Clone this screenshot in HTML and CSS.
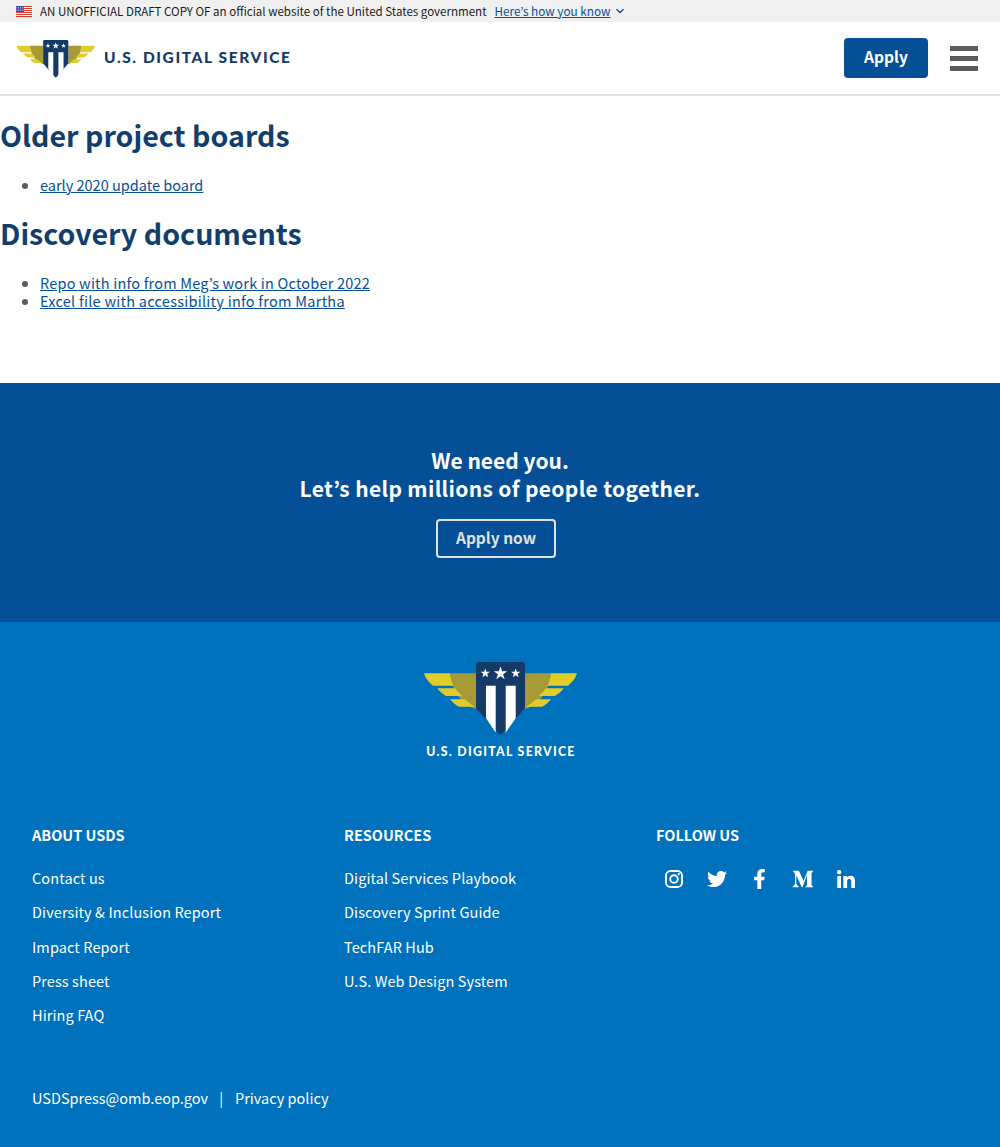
FILE: index.html
```html
<!DOCTYPE html>
<html lang="en">
<head>
  <meta charset="UTF-8">
  <meta name="viewport" content="width=device-width, initial-scale=1.0">
  <title>U.S. Digital Service</title>
  <link rel="stylesheet" href="styles.css">
</head>
<body>
  <svg class="defs" width="0" height="0" aria-hidden="true">
    <symbol id="usds-mark" viewBox="0 0 154 74">
      <g id="wing-left">
        <path fill="#a69a37" d="M26 11.3H52V47C38 43 28 30 26 11.3z"/>
        <path fill="#e1cd2a" d="M0 11.3H26C26.600 16 27.800 20 29.500 23.700H9C4 20 1.500 16 0 11.300z"/>
        <path fill="#e1cd2a" d="M13.300 26.300H31C32.800 29 35.500 31.800 38.500 34H22C18.500 32 15.500 29.500 13.300 26.300z"/>
        <path fill="#e1cd2a" d="M26 37.300H41C43.800 39.800 47 42.600 51 44.800H35C31.500 43 28.500 40.500 26 37.300z"/>
      </g>
      <use href="#wing-left" transform="translate(153 0) scale(-1 1)"/>
      <path fill="#153a66" d="M54.500 0H98.500A2.500 2.500 0 0 1 101 2.500V46L78.500 71.500A2.500 2.500 0 0 1 74.500 71.500L52 46V2.500A2.500 2.500 0 0 1 54.500 0z"/>
      <path fill="#fff" d="M62 23.700H71.700V70.500L62 56.300zM81.700 23.700H91.700V56.300L81.700 70.500z"/>
      <path fill="#fff" d="M61.300 6.500L62.500 9.700H65.900L63.200 11.800L64.200 15.200L61.300 13.200L58.400 15.200L59.400 11.800L56.700 9.700H60.100z"/>
      <path fill="#fff" d="M76.500 4.500L78.100 9.200H83.200L79.100 12.300L80.700 17.200L76.500 14.200L72.300 17.200L73.900 12.300L69.800 9.200H74.900z"/>
      <path fill="#fff" d="M91.700 6.500L92.900 9.700H96.300L93.600 11.800L94.600 15.200L91.700 13.200L88.800 15.200L89.800 11.800L87.100 9.700H90.500z"/>
    </symbol>
  </svg>

  <div class="gov-banner">
    <svg class="flag" viewBox="0 0 16 11" width="16" height="11">
      <rect width="16" height="11" fill="#fff"/>
      <path stroke="#d8392b" stroke-width="1" d="M0 .5H16M0 2.500H16M0 4.500H16M0 6.500H16M0 8.500H16M0 10.500H16"/>
      <rect width="8" height="6" fill="#3c4aa8"/>
      <path stroke="#dfe1f2" stroke-width=".8" stroke-dasharray=".8 1" d="M.5 1.500H8M.5 3H8M.5 4.500H8"/>
    </svg>
    <span>AN UNOFFICIAL DRAFT COPY OF an official website of the United States government</span>
    <a href="#">Here’s how you know</a>
    <svg class="chevron" viewBox="0 0 10 6" width="10" height="6"><path fill="none" stroke="#054f96" stroke-width="1.400" d="M1.500 1.200L5 4.500L8.500 1.200"/></svg>
  </div>

  <header class="site-header">
    <a class="brand" href="#">
      <svg class="brand-mark" width="80" height="38"><use href="#usds-mark"/></svg>
      <span class="brand-name">U.S. DIGITAL SERVICE</span>
    </a>
    <div class="header-actions">
      <a class="btn-apply" href="#">Apply</a>
      <div class="menu-icon"><span></span><span></span><span></span></div>
    </div>
  </header>

  <main class="content">
    <h1>Older project boards</h1>
    <ul>
      <li><a href="#">early 2020 update board</a></li>
    </ul>
    <h1>Discovery documents</h1>
    <ul class="list-wide">
      <li><a href="#">Repo with info from Meg’s work in October 2022</a></li>
      <li><a href="#">Excel file with accessibility info from Martha</a></li>
    </ul>
  </main>

  <section class="cta">
    <h2>We need you.<br><span class="cta-line">Let’s help millions of people together.</span></h2>
    <a class="btn-outline" href="#">Apply now</a>
  </section>

  <footer class="site-footer">
    <div class="footer-logo">
      <svg width="154" height="74"><use href="#usds-mark"/></svg>
      <span class="footer-logo-name">U.S. DIGITAL SERVICE</span>
    </div>

    <div class="footer-columns">
      <div>
        <h3>About USDS</h3>
        <ul>
          <li><a href="#">Contact us</a></li>
          <li><a href="#">Diversity &amp; Inclusion Report</a></li>
          <li><a href="#">Impact Report</a></li>
          <li><a href="#">Press sheet</a></li>
          <li><a href="#">Hiring FAQ</a></li>
        </ul>
      </div>
      <div>
        <h3>Resources</h3>
        <ul>
          <li><a href="#">Digital Services Playbook</a></li>
          <li><a href="#">Discovery Sprint Guide</a></li>
          <li><a href="#">TechFAR Hub</a></li>
          <li><a href="#">U.S. Web Design System</a></li>
        </ul>
      </div>
      <div>
        <h3>Follow us</h3>
        <div class="social">
          <a href="#" aria-label="Instagram">
            <svg viewBox="0 0 20 20" width="20" height="20" fill="none" stroke="#fff" stroke-width="1.900"><rect x="2" y="2" width="16" height="16" rx="4.500"/><circle cx="10" cy="10" r="3.800"/><circle cx="14.800" cy="5.200" r="1.100" fill="#fff" stroke="none"/></svg>
          </a>
          <a href="#" aria-label="Twitter">
            <svg viewBox="0 0 512 512" width="20" height="20" fill="#fff"><path d="M459.37 151.716c.325 4.548.325 9.097.325 13.645 0 138.72-105.583 298.558-298.558 298.558-59.452 0-114.68-17.219-161.137-47.106 8.447.974 16.568 1.299 25.34 1.299 49.055 0 94.213-16.568 130.274-44.832-46.132-.975-84.792-31.188-98.112-72.772 6.498.974 12.995 1.624 19.818 1.624 9.421 0 18.843-1.3 27.614-3.573-48.081-9.747-84.143-51.98-84.143-102.985v-1.299c13.969 7.797 30.214 12.67 47.431 13.319-28.264-18.843-46.781-51.005-46.781-87.391 0-19.492 5.197-37.36 14.294-52.954 51.655 63.675 129.3 105.258 216.365 109.807-1.624-7.797-2.599-15.918-2.599-24.04 0-57.828 46.782-104.934 104.934-104.934 30.213 0 57.502 12.67 76.67 33.137 23.715-4.548 46.456-13.32 66.599-25.34-7.798 24.366-24.366 44.833-46.132 57.827 21.117-2.273 41.584-8.122 60.426-16.243-14.292 20.791-32.161 39.308-52.628 54.253z"/></svg>
          </a>
          <a href="#" aria-label="Facebook">
            <svg viewBox="0 0 320 512" width="13" height="20" fill="#fff"><path d="M279.14 288l14.22-92.66h-88.91v-60.13c0-25.35 12.42-50.06 52.24-50.06h40.42V6.26S260.43 0 225.36 0c-73.22 0-121.08 44.38-121.08 124.72v70.62H22.89V288h81.39v224h100.17V288z"/></svg>
          </a>
          <a href="#" aria-label="Medium">
            <svg viewBox="0 0 512 512" width="22" height="22" fill="#fff"><path d="M71.5 142.3c.6-5.9-1.7-11.8-6.1-15.8L20.3 72.1V64h140.2l108.4 237.7L364.2 64h133.7v8.1l-38.6 37c-3.3 2.5-5 6.7-4.3 10.8v272c-.7 4.1 1 8.3 4.3 10.8l37.7 37v8.1H307.3v-8.1l39.1-37.9c3.8-3.8 3.8-5 3.8-10.800V171.2l-108.7 275.8h-14.7L100.6 171.2v184.9c-1.1 7.8 1.5 15.6 7 21.2l50.8 61.6v8.1H14.4v-8.1l50.8-61.6c5.4-5.6 7.9-13.5 6.300-21.2V142.3z"/></svg>
          </a>
          <a href="#" aria-label="LinkedIn">
            <svg viewBox="0 0 448 448" width="18" height="18" fill="#fff"><path d="M100.28 448H7.4V148.9h92.88zM53.79 108.1C24.09 108.1 0 83.5 0 53.8a53.79 53.79 0 0 1 107.58 0c0 29.7-24.1 54.3-53.79 54.3zM447.9 448h-92.68V302.4c0-34.7-.7-79.2-48.29-79.2-48.29 0-55.69 37.7-55.69 76.7V448h-92.78V148.9h89.08v40.8h1.3c12.4-23.5 42.69-48.3 87.88-48.3 94 0 111.28 61.9 111.28 142.3V448z"/></svg>
          </a>
        </div>
      </div>
    </div>

    <div class="footer-bottom">
      <a href="#">USDSpress@omb.eop.gov</a>
      <span class="sep">|</span>
      <a href="#">Privacy policy</a>
    </div>
  </footer>
</body>
</html>
```

FILE: styles.css
```css
body {
  margin: 0;
  font-family: "Noto Sans CJK KR", "Liberation Sans", sans-serif;
  font-size: 14.5px;
  line-height: 18px;
  color: #5c5c5c;
  background: #fff;
}

a {
  color: #054f96;
}

.defs {
  position: absolute;
}

/* top banner */
.gov-banner {
  display: flex;
  align-items: center;
  height: 22px;
  padding-left: 16px;
  background: #f0f0f0;
  color: #1b1b1b;
  font-size: 11.550px;
}

.flag {
  margin-right: 8px;
}

.gov-banner a {
  margin-left: 8px;
  font-size: 11.750px;
  color: #054f96;
}

.chevron {
  margin-left: 5px;
}

/* header */
.site-header {
  display: flex;
  justify-content: space-between;
  align-items: center;
  height: 72px;
  padding: 0 22px 0 16px;
  border-bottom: 2px solid #dfe1e2;
}

.brand {
  display: flex;
  align-items: center;
  gap: 8px;
  text-decoration: none;
}

.brand-mark {
  margin-top: 2px;
}

.brand-name {
  font-family: Lato, sans-serif;
  font-weight: 900;
  font-size: 15.500px;
  letter-spacing: 1.600px;
  color: #153a66;
  margin-top: -2px;
}

.header-actions {
  display: flex;
  align-items: center;
  gap: 22px;
}

.btn-apply {
  display: block;
  width: 84px;
  height: 40px;
  border-radius: 4px;
  background: #054f96;
  color: #fff;
  font-size: 15.600px;
  font-weight: 700;
  line-height: 36px;
  text-align: center;
  text-decoration: none;
}

.menu-icon {
  display: flex;
  flex-direction: column;
  gap: 5px;
  width: 28px;
}

.menu-icon span {
  height: 5px;
  background: #5c5c5c;
}

/* content */
.content {
  height: 287px;
  padding-top: 1px;
  box-sizing: border-box;
}

h1 {
  margin: 0;
  padding: 19px 0 0;
  font-size: 28.600px;
  line-height: 38px;
  font-weight: 700;
  color: #123e6c;
}

.content ul {
  margin: 0 0 1px;
  padding: 22px 0 0 40px;
}

.content .list-wide {
  letter-spacing: .2px;
}

.content .list-wide li + li {
  letter-spacing: .26px;
}

/* call to action */
.cta {
  height: 239px;
  padding-top: 63px;
  box-sizing: border-box;
  background: #054f96;
  color: #fff;
  text-align: center;
}

.cta h2 {
  margin: 0 0 17px;
  font-size: 21px;
  line-height: 28px;
  font-weight: 700;
}

.cta-line {
  letter-spacing: .33px;
}

.btn-outline {
  display: inline-block;
  box-sizing: border-box;
  width: 120px;
  height: 39px;
  margin-right: 8px;
  border: 2px solid #dfe1e2;
  border-radius: 4px;
  color: #dfe1e2;
  font-size: 15.500px;
  font-weight: 700;
  line-height: 33px;
  text-decoration: none;
}

/* footer */
.site-footer {
  height: 525px;
  padding: 40px 32px 0;
  box-sizing: border-box;
  background: #0071bc;
  color: #fff;
}

.site-footer a {
  color: #fff;
  text-decoration: none;
}

.footer-logo {
  display: flex;
  flex-direction: column;
  align-items: center;
}

.footer-logo svg {
  display: block;
  margin-left: 2px;
}

.footer-logo-name {
  margin-top: 8px;
  padding-left: 2px;
  font-family: Lato, sans-serif;
  font-weight: 900;
  font-size: 12.300px;
  letter-spacing: 1.300px;
  line-height: 16px;
}

.footer-columns {
  display: grid;
  grid-template-columns: repeat(3, 312px);
  margin-top: 63px;
}

.footer-columns h3 {
  margin: 0 0 19px;
  font-size: 14.500px;
  line-height: 24px;
  font-weight: 700;
  text-transform: uppercase;
}

.footer-columns ul {
  margin: 0;
  padding: 0;
  list-style: none;
}

.footer-columns li {
  height: 34.250px;
  line-height: 24px;
  letter-spacing: .1px;
}

.social {
  display: flex;
  align-items: center;
  height: 24px;
  padding: 1px 0 0 6px;
}

.social a {
  display: flex;
  justify-content: center;
  width: 43.150px;
  margin-left: -10px;
  margin-right: 10px;
}

.footer-bottom {
  display: flex;
  gap: 11px;
  margin-top: 49px;
  line-height: 24px;
}

.sep {
  margin-right: 1px;
}
```
